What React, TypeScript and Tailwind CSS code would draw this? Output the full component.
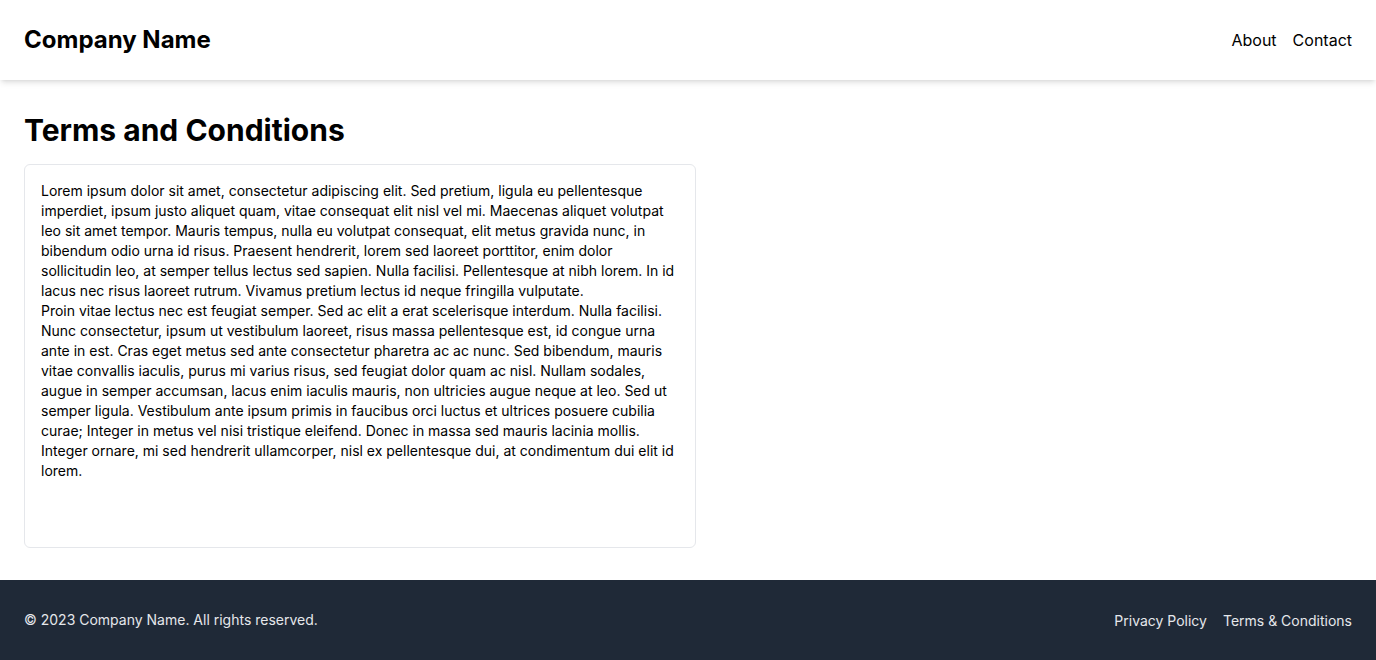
export default function App() {
  return (
    <div
      className="min-h-screen flex flex-col bg-white text-black"
      style={{ fontFamily: "Inter, 'Liberation Sans', sans-serif" }}
    >
      <header className="h-20 px-6 flex justify-between items-center bg-white shadow-md">
        <h1 className="text-2xl font-bold">Company Name</h1>
        <nav className="flex items-center gap-4 text-base">
          <a className="cursor-pointer">About</a>
          <a className="cursor-pointer">Contact</a>
        </nav>
      </header>

      <main className="flex-1 px-6 py-8">
        <h2 className="text-3xl font-bold mb-4">Terms and Conditions</h2>
        <div className="max-w-2xl h-96 p-4 border border-gray-200 rounded-md text-sm leading-5">
          <p>
            Lorem ipsum dolor sit amet, consectetur adipiscing elit. Sed pretium, ligula eu pellentesque
            imperdiet, ipsum justo aliquet quam, vitae consequat elit nisl vel mi. Maecenas aliquet volutpat
            leo sit amet tempor. Mauris tempus, nulla eu volutpat consequat, elit metus gravida nunc, in
            bibendum odio urna id risus. Praesent hendrerit, lorem sed laoreet porttitor, enim dolor
            sollicitudin leo, at semper tellus lectus sed sapien. Nulla facilisi. Pellentesque at nibh lorem. In id
            lacus nec risus laoreet rutrum. Vivamus pretium lectus id neque fringilla vulputate.
          </p>
          <p>
            Proin vitae lectus nec est feugiat semper. Sed ac elit a erat scelerisque interdum. Nulla facilisi.
            Nunc consectetur, ipsum ut vestibulum laoreet, risus massa pellentesque est, id congue urna
            ante in est. Cras eget metus sed ante consectetur pharetra ac ac nunc. Sed bibendum, mauris
            vitae convallis iaculis, purus mi varius risus, sed feugiat dolor quam ac nisl. Nullam sodales,
            augue in semper accumsan, lacus enim iaculis mauris, non ultricies augue neque at leo. Sed ut
            semper ligula. Vestibulum ante ipsum primis in faucibus orci luctus et ultrices posuere cubilia
            curae; Integer in metus vel nisi tristique eleifend. Donec in massa sed mauris lacinia mollis.
            Integer ornare, mi sed hendrerit ullamcorper, nisl ex pellentesque dui, at condimentum dui elit id
            lorem.
          </p>
        </div>
      </main>

      <footer className="h-20 px-6 flex justify-between items-center bg-[#1f2937] text-gray-200 text-sm">
        <p>© 2023 Company Name. All rights reserved.</p>
        <nav className="flex items-center gap-4 pt-0.5">
          <a className="cursor-pointer">Privacy Policy</a>
          <a className="cursor-pointer">Terms &amp; Conditions</a>
        </nav>
      </footer>
    </div>
  );
}
